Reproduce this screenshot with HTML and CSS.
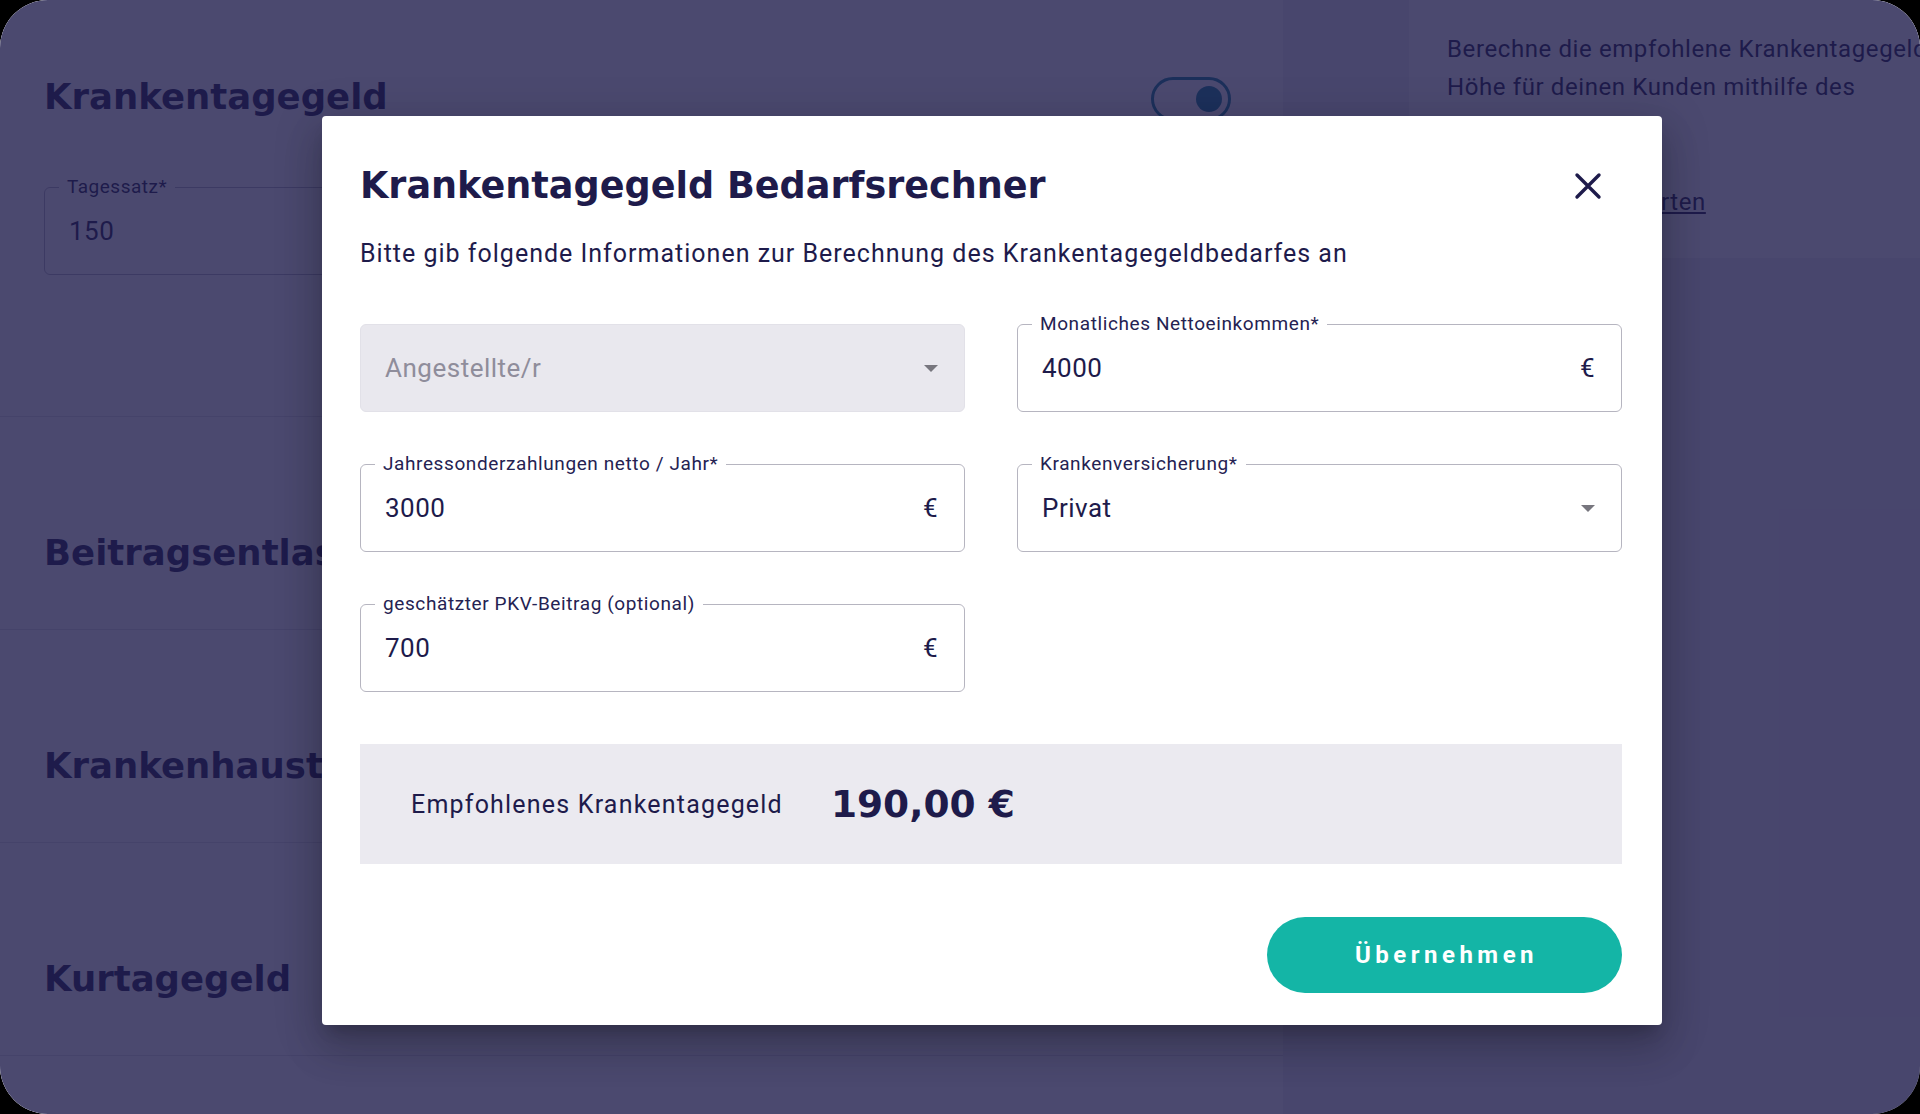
FILE: index.html
```html
<!DOCTYPE html>
<html lang="de">
<head>
<meta charset="utf-8">
<title>Krankentagegeld Bedarfsrechner</title>
<link rel="stylesheet" href="styles.css">
</head>
<body>
<div class="frame">
  <div class="page">
    <main class="main">
      <section class="sec sec-first">
        <div class="sec-head">
          <h2 class="bg-title">Krankentagegeld</h2>
          <span class="toggle"><span class="knob"></span></span>
        </div>
        <div class="bg-field">
          <span class="bg-label">Tagessatz*</span>
          <span>150</span>
        </div>
      </section>
      <section class="sec"><h2 class="bg-title">Beitragsentlastung</h2></section>
      <section class="sec"><h2 class="bg-title">Krankenhaustagegeld</h2></section>
      <section class="sec"><h2 class="bg-title">Kurtagegeld</h2></section>
      <section class="sec"></section>
    </main>
    <aside class="aside">
      <div class="info-card">
        <p>Berechne die empfohlene Krankentagegeld<br>Höhe für deinen Kunden mithilfe des</p>
        <a class="info-link" href="#">Bedarfsrechner starten</a>
      </div>
    </aside>
  </div>

  <div class="overlay">
    <div class="modal" role="dialog">
      <div class="modal-head">
        <h1 class="modal-title">Krankentagegeld Bedarfsrechner</h1>
        <svg class="close" viewBox="0 0 28 28" aria-label="Schließen">
          <path d="M3 3 L25 25 M25 3 L3 25" stroke="#1e1b4b" stroke-width="3.4" stroke-linecap="round" fill="none"/>
        </svg>
      </div>
      <p class="modal-sub">Bitte gib folgende Informationen zur Berechnung des Krankentagegeldbedarfes an</p>

      <div class="grid">
        <div class="field field-disabled">
          <span>Angestellte/r</span>
          <span class="arrow"></span>
        </div>
        <div class="field">
          <span class="field-label">Monatliches Nettoeinkommen*</span>
          <span>4000</span>
          <span>€</span>
        </div>
        <div class="field">
          <span class="field-label">Jahressonderzahlungen netto / Jahr*</span>
          <span>3000</span>
          <span>€</span>
        </div>
        <div class="field">
          <span class="field-label">Krankenversicherung*</span>
          <span>Privat</span>
          <span class="arrow"></span>
        </div>
        <div class="field">
          <span class="field-label">geschätzter PKV-Beitrag (optional)</span>
          <span>700</span>
          <span>€</span>
        </div>
      </div>

      <div class="result">
        <span class="result-label">Empfohlenes Krankentagegeld</span>
        <span class="result-value">190,00 €</span>
      </div>

      <div class="actions">
        <button class="btn" type="button">Übernehmen</button>
      </div>
    </div>
  </div>
</div>
</body>
</html>
```

FILE: styles.css
```css
* { box-sizing: border-box; }

html, body {
  margin: 0;
  background: #000;
}

body {
  font-family: Roboto, "Liberation Sans", sans-serif;
  color: #1e1b4b;
}

.frame {
  position: relative;
  width: 1920px;
  height: 1114px;
  border-radius: 48px;
  overflow: hidden;
  background: #eeeef3;
}

.page {
  display: flex;
  gap: 126px;
  height: 100%;
}

.main {
  width: 1283px;
  flex: none;
  display: flex;
  flex-direction: column;
}

.sec {
  flex: none;
  height: 213px;
  background: #fff;
  border-top: 1px solid #dedee6;
  padding: 114px 44px 0;
}

.sec-first {
  height: 416px;
  border-top: none;
  padding: 75px 52px 0 44px;
}

.sec-head {
  display: flex;
  justify-content: space-between;
  align-items: center;
  height: 44px;
}

.bg-title {
  margin: 0;
  font-family: "DejaVu Sans", sans-serif;
  font-weight: 700;
  font-size: 35.5px;
  line-height: 44px;
  color: #1e1b4b;
  white-space: nowrap;
}

.toggle {
  width: 80px;
  height: 44px;
  margin-top: 4px;
  border: 3px solid #17819a;
  border-radius: 22px;
  display: flex;
  align-items: center;
  justify-content: flex-end;
  padding-right: 6px;
}

.knob {
  width: 26px;
  height: 26px;
  border-radius: 50%;
  background: #17819a;
}

.bg-field {
  position: relative;
  margin-top: 68px;
  width: 606px;
  height: 88px;
  border: 1.5px solid #b6b5c0;
  border-radius: 6px;
  display: flex;
  align-items: center;
  padding: 0 24px;
  font-size: 26px;
  letter-spacing: 0.5px;
  color: #1e1b4b;
}

.bg-label {
  position: absolute;
  top: -12px;
  left: 14px;
  padding: 0 8px;
  background: #fff;
  font-size: 19px;
  line-height: 22px;
  letter-spacing: 0.5px;
}

.aside {
  width: 560px;
  flex: none;
}

.info-card {
  height: 258px;
  background: #fff;
  padding: 30px 38px;
  font-size: 24px;
  line-height: 38px;
  letter-spacing: 0.6px;
  white-space: nowrap;
  color: #1e1b4b;
}

.info-card p { margin: 0; }

.info-link {
  display: block;
  margin-top: 77px;
  color: #1e1b4b;
  text-decoration: underline;
}

/* overlay + dialog */
.overlay {
  position: absolute;
  inset: 0;
  background: rgba(30, 27, 75, 0.8);
  padding: 116px 0 0 322px;
}

.modal {
  width: 1340px;
  height: 909px;
  background: #fff;
  border-radius: 4px;
  padding: 48px 40px 32px 38px;
  display: flex;
  flex-direction: column;
  box-shadow: 0 11px 15px -7px rgba(0,0,0,0.2),
              0 24px 38px 3px rgba(0,0,0,0.14),
              0 9px 46px 8px rgba(0,0,0,0.12);
}

.modal-head {
  display: flex;
  justify-content: space-between;
  align-items: center;
  height: 44px;
}

.modal-title {
  margin: 0;
  font-family: "DejaVu Sans", sans-serif;
  font-weight: 700;
  font-size: 36.6px;
  line-height: 44px;
  color: #1e1b4b;
  white-space: nowrap;
}

.close {
  width: 28px;
  height: 28px;
  margin-right: 20px;
}

.modal-sub {
  margin: 30px 0 0;
  font-size: 25px;
  line-height: 32px;
  letter-spacing: 1px;
  color: #1e1b4b;
}

.grid {
  margin-top: 54px;
  display: grid;
  grid-template-columns: 1fr 1fr;
  column-gap: 52px;
  row-gap: 52px;
}

.field {
  position: relative;
  height: 88px;
  border: 1.5px solid #b6b5c0;
  border-radius: 6px;
  display: flex;
  align-items: center;
  justify-content: space-between;
  padding: 0 26px 0 24px;
  font-size: 26px;
  letter-spacing: 0.5px;
  color: #1e1b4b;
}

.field-disabled {
  background: #e9e8ee;
  border-color: #e2e1e8;
  color: #8f8d9b;
}

.field-label {
  position: absolute;
  top: -12px;
  left: 14px;
  padding: 0 8px;
  background: #fff;
  font-size: 19px;
  line-height: 22px;
  letter-spacing: 0.6px;
  color: #252252;
  white-space: nowrap;
}

.arrow {
  width: 0;
  height: 0;
  border-left: 7px solid transparent;
  border-right: 7px solid transparent;
  border-top: 7px solid #77767e;
}

.result {
  margin-top: 52px;
  height: 122px;
  background: #ebeaf0;
  display: flex;
  align-items: center;
  gap: 48px;
  padding-left: 51px;
}

.result-label {
  font-size: 25px;
  letter-spacing: 1.2px;
  color: #1e1b4b;
}

.result-value {
  font-family: "DejaVu Sans", sans-serif;
  font-weight: 700;
  font-size: 37.5px;
  color: #1e1b4b;
  white-space: nowrap;
}

.actions {
  margin-top: 53px;
  display: flex;
  justify-content: flex-end;
}

.btn {
  width: 355px;
  height: 76px;
  border: none;
  border-radius: 38px;
  background: #14b5a6;
  color: #fff;
  font-family: Roboto, "Liberation Sans", sans-serif;
  font-weight: 700;
  font-size: 24px;
  letter-spacing: 4.5px;
  padding: 0 0 0 4px;
}
```
